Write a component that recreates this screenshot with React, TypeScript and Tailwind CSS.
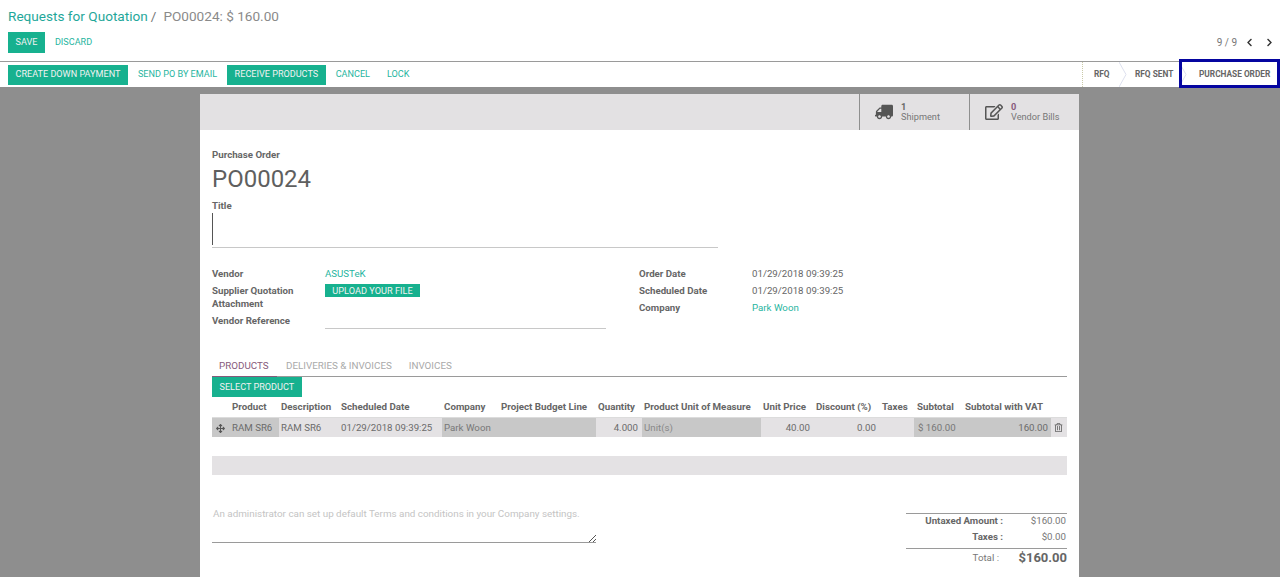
import { FaArrowsAlt, FaChevronLeft, FaChevronRight, FaRegEdit, FaRegTrashAlt, FaTruck } from 'react-icons/fa'

const font = { teal: 'text-[#1fb5a0]', primary: 'bg-[#17b18f] text-[#f2f2f2]' }

const COLUMNS = [
  { label: '', width: 'w-[20px]' },
  { label: 'Product', width: 'w-[47px]' },
  { label: 'Description', width: 'w-[60px]' },
  { label: 'Scheduled Date', width: 'w-[103px]' },
  { label: 'Company', width: 'w-[57px]' },
  { label: 'Project Budget Line', width: 'w-[97px]' },
  { label: 'Quantity', width: 'w-[46px]' },
  { label: 'Product Unit of Measure', width: 'w-[119px]' },
  { label: 'Unit Price', width: 'w-[53px]' },
  { label: 'Discount (%)', width: 'w-[66px]' },
  { label: 'Taxes', width: 'w-[34px]' },
  { label: 'Subtotal', width: 'w-[47px] pl-[3px]' },
  { label: 'Subtotal with VAT', width: 'w-[90px]' },
  { label: '', width: 'w-[16px]' },
]

function Button({ children, primary, tall }: { children: string; primary?: boolean; tall?: boolean }) {
  const height = tall ? 'h-[21px]' : 'h-[20px]'
  return (
    <button
      type="button"
      className={
        primary
          ? `block ${height} px-[7.5px] pt-px text-[9.1px] ${font.primary}`
          : `block ${height} px-[10px] pt-px text-[9.1px] ${font.teal}`
      }
    >
      {children}
    </button>
  )
}

function Label({ children, className = '' }: { children: React.ReactNode; className?: string }) {
  return <div className={`text-[9.7px] font-bold leading-[13px] text-[#666] ${className}`}>{children}</div>
}

function Header() {
  return (
    <header className="flex h-[62px] flex-col border-b border-[#9a9a9a] pl-[8px] pr-[6px] pt-[8px]">
      <div className="flex items-center text-[13.6px] leading-[16px]">
        <span className="text-[#1fa79a]">Requests for Quotation</span>
        <span className="ml-[3px] text-[#777]">/</span>
        <span className="ml-[7px] text-[#8a8a8a]">PO00024: $ 160.00</span>
      </div>
      <div className="mt-[8px] flex items-center justify-between">
        <div className="flex items-center">
          <Button primary tall>SAVE</Button>
          <Button tall>DISCARD</Button>
        </div>
        <div className="flex items-center text-[10px] text-[#777]">
          <span>9 / 9</span>
          <FaChevronLeft className="ml-[8px] size-[9px] text-[#333]" />
          <FaChevronRight className="ml-[11px] size-[9px] text-[#333]" />
        </div>
      </div>
    </header>
  )
}

function StatusCell({ label, width, pad }: { label: string; width: string; pad: string }) {
  return (
    <div className={`relative flex h-full items-center ${width} ${pad} text-[8.3px] font-bold text-[#666]`}>
      {label}
      <svg className="absolute right-[-8px] top-0 h-full w-[8px]" viewBox="0 0 8 25" fill="none">
        <path d="M0 0 L7 12.5 L0 25" stroke="#dde0ee" strokeWidth="1" />
      </svg>
    </div>
  )
}

function StatusBar() {
  return (
    <div className="flex h-[25px] items-center justify-between pl-[8px]">
      <div className="flex items-center">
        <Button primary>CREATE DOWN PAYMENT</Button>
        <Button>SEND PO BY EMAIL</Button>
        <Button primary>RECEIVE PRODUCTS</Button>
        <Button>CANCEL</Button>
        <div className="-ml-[3px]">
          <Button>LOCK</Button>
        </div>
      </div>
      <div className="relative flex h-full items-center border-l border-dotted border-[#c9c9a8]">
        <StatusCell label="RFQ" width="w-[36px]" pad="pl-[11px]" />
        <StatusCell label="RFQ SENT" width="w-[60px]" pad="pl-[16px]" />
        <div className="flex h-full w-[101px] items-center pl-[20px] text-[8.3px] font-bold text-[#666]">PURCHASE ORDER</div>
        <div className="absolute right-0 top-[-3px] h-[29px] w-[101px] border-[3px] border-[#0505a0]" />
      </div>
    </div>
  )
}

function SheetButtons() {
  return (
    <div className="flex h-[36px] justify-end bg-[#e3e1e3]">
      <div className="flex w-[110px] items-center border-l border-[#8f8f8f] pl-[15px]">
        <FaTruck className="size-[18px] -scale-x-100 text-[#555]" />
        <div className="ml-[8px] text-[9.2px] leading-[10px] text-[#777]">
          <div className="font-bold text-[#666]">1</div>
          <div>Shipment</div>
        </div>
      </div>
      <div className="flex w-[110px] items-center border-l border-[#8f8f8f] pl-[15px]">
        <FaRegEdit className="size-[18px] text-[#555]" />
        <div className="ml-[8px] text-[9.2px] leading-[10px] text-[#777]">
          <div className="font-bold text-[#875a7b]">0</div>
          <div>Vendor Bills</div>
        </div>
      </div>
    </div>
  )
}

function Title() {
  return (
    <div>
      <Label className="pt-[18px]">Purchase Order</Label>
      <div className="mt-[3px] text-[24px] leading-[30px] text-[#5f5f5f]">PO00024</div>
      <Label className="mt-[5px]">Title</Label>
      <div className="mt-[1px] h-[35px] w-[506px] border-b border-[#c8c8c8]">
        <div className="h-[32px] w-px bg-[#555]" />
      </div>
    </div>
  )
}

function Fields() {
  return (
    <div className="mt-[17px] flex">
      <div className="w-[427px]">
        <div className="flex h-[17px] items-center">
          <Label className="w-[113px]">Vendor</Label>
          <span className={`text-[9.7px] leading-[13px] ${font.teal}`}>ASUSTeK</span>
        </div>
        <div className="flex h-[30px] items-start pt-[2px]">
          <Label className="w-[113px]">Supplier Quotation Attachment</Label>
          <span className={`h-[13px] w-[95px] text-center text-[9.2px] leading-[13px] ${font.primary}`}>UPLOAD YOUR FILE</span>
        </div>
        <div className="flex h-[17px] items-center">
          <Label className="w-[113px]">Vendor Reference</Label>
          <span className="mt-[7px] h-[10px] w-[281px] border-b border-[#c8c8c8]" />
        </div>
      </div>
      <div className="text-[9.7px] text-[#666]">
        {[
          ['Order Date', '01/29/2018 09:39:25'],
          ['Scheduled Date', '01/29/2018 09:39:25'],
          ['Company', 'Park Woon'],
        ].map(([k, v]) => (
          <div key={k} className="flex h-[17px] items-center">
            <Label className="w-[113px]">{k}</Label>
            <span className={k === 'Company' ? `leading-[13px] ${font.teal}` : 'leading-[13px]'}>{v}</span>
          </div>
        ))}
      </div>
    </div>
  )
}

function Tabs() {
  return (
    <div className="mt-[26px] flex h-[22px] items-start border-b border-[#9a9a9a] text-[9.8px] leading-[21px] text-[#a9a9a9]">
      <span className="w-[65px] border-b border-[#875a7b] pl-[7px] text-[#875a7b]">PRODUCTS</span>
      <span className="ml-[9px]">DELIVERIES &amp; INVOICES</span>
      <span className="ml-[17px]">INVOICES</span>
    </div>
  )
}

function Lines() {
  const cell = 'flex h-full items-center px-[2px] pt-[1px] text-[9.7px] text-[#6b6b6b]'
  const grey = 'bg-[#c8c8c8]'
  const light = 'bg-[#e4e2e4]'
  return (
    <div>
      <Button primary>SELECT PRODUCT</Button>
      <div className="flex h-[21px] items-center border-b border-[#dcdcdc]">
        {COLUMNS.map((c, i) => (
          <div key={i} className={`${c.width} ${i === 12 ? 'pl-[4px]' : i === 1 || i === 11 ? '' : 'pl-[2px]'} whitespace-nowrap text-[9.75px] font-bold text-[#666]`}>
            {c.label}
          </div>
        ))}
      </div>
      <div className="flex h-[19px] items-center">
        <div className={`${cell} ${grey} w-[67px]`}>
          <FaArrowsAlt className="ml-[2px] mr-[7px] size-[9px] shrink-0 text-[#555]" />
          RAM SR6
        </div>
        <div className={`${cell} ${light} w-[60px]`}>RAM SR6</div>
        <div className={`${cell} ${light} w-[103px]`}>01/29/2018 09:39:25</div>
        <div className={`${cell} ${grey} w-[154px] text-[#777]`}>Park Woon</div>
        <div className={`${cell} ${light} w-[46px] justify-end pr-[4px]`}>4.000</div>
        <div className={`${cell} ${grey} w-[119px] text-[#888]`}>Unit(s)</div>
        <div className={`${light} flex h-full w-[153px] items-center pt-[1px] text-[9.7px] text-[#6b6b6b]`}>
          <span className="w-[49px] text-right">40.00</span>
          <span className="w-[66px] text-right">0.00</span>
        </div>
        <div className={`${cell} ${grey} w-[137px] justify-between pl-[4px] pr-[3px]`}>
          <span className="text-[#777]">$ 160.00</span>
          <span>160.00</span>
        </div>
        <div className={`${light} flex h-full w-[16px] items-center justify-center pr-[2px]`}>
          <FaRegTrashAlt className="size-[9px] text-[#666]" />
        </div>
      </div>
      <div className={`mt-[19px] h-[19px] ${light}`} />
    </div>
  )
}

function Footer() {
  return (
    <div className="mt-[30px] flex items-start justify-between">
      <div className="relative mt-[1px] h-[37px] w-[384px] border-b border-[#9a9a9a] pl-px pt-[1px] text-[9.85px] leading-[14px] text-[#c4c4c4]">
        An administrator can set up default Terms and conditions in your Company settings.
        <svg className="absolute bottom-0 right-0 size-[8px]" viewBox="0 0 8 8" fill="none" stroke="#555">
          <path d="M1 8 L8 1 M5 8 L8 5" />
        </svg>
      </div>
      <div className="mt-[8px] w-[161px] text-[9.7px] text-[#666]">
        <div className="flex h-[15px] items-center border-t border-[#9a9a9a]">
          <span className="w-[97px] text-right font-bold">Untaxed Amount :</span>
          <span className="flex-1 pr-px text-right text-[#777]">$160.00</span>
        </div>
        <div className="flex h-[20px] items-center pb-[2px]">
          <span className="w-[97px] text-right font-bold">Taxes :</span>
          <span className="flex-1 pr-px text-right text-[#777]">$0.00</span>
        </div>
        <div className="flex h-[19px] items-center border-t border-[#9a9a9a]">
          <span className="w-[93px] text-right text-[#777]">Total :</span>
          <span className="flex-1 text-right text-[13px] font-bold">$160.00</span>
        </div>
      </div>
    </div>
  )
}

export default function App() {
  return (
    <div className="flex h-[577px] w-[1280px] flex-col overflow-hidden bg-white font-['Roboto',sans-serif]">
      <Header />
      <StatusBar />
      <main className="flex-1 overflow-hidden bg-[#8e8e8e] pt-[7px]">
        <div className="ml-[200px] h-[600px] w-[879px] bg-white">
          <SheetButtons />
          <div className="px-[12px]">
            <Title />
            <Fields />
            <Tabs />
            <Lines />
            <Footer />
          </div>
        </div>
      </main>
    </div>
  )
}
